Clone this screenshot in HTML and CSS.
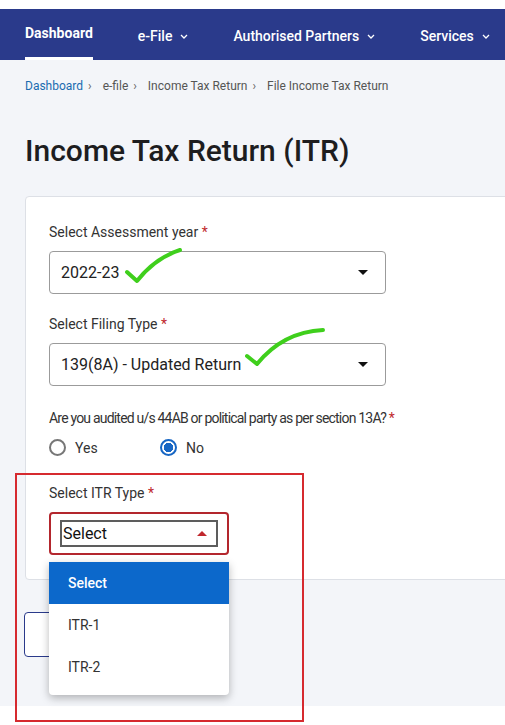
FILE: index.html
```html
<!DOCTYPE html>
<html lang="en">
<head>
<meta charset="utf-8">
<title>Income Tax Return (ITR)</title>
<link rel="stylesheet" href="styles.css">
</head>
<body>
<div class="page">
  <div class="topstrip"></div>
  <nav class="nav">
    <a class="nav-item active">Dashboard</a>
    <a class="nav-item">e-File <svg class="chev" viewBox="0 0 8 5" width="8" height="5"><path d="M1 1 L4 4 L7 1" fill="none" stroke="#fff" stroke-width="1.3"/></svg></a>
    <a class="nav-item">Authorised Partners <svg class="chev" viewBox="0 0 8 5" width="8" height="5"><path d="M1 1 L4 4 L7 1" fill="none" stroke="#fff" stroke-width="1.3"/></svg></a>
    <a class="nav-item">Services <svg class="chev" viewBox="0 0 8 5" width="8" height="5"><path d="M1 1 L4 4 L7 1" fill="none" stroke="#fff" stroke-width="1.3"/></svg></a>
  </nav>
  <main class="main">
    <div class="crumbs">
      <span class="crumb-link">Dashboard</span><span class="sep">›</span>
      <span>e-file</span><span class="sep">›</span>
      <span>Income Tax Return</span><span class="sep">›</span>
      <span>File Income Tax Return</span>
    </div>
    <h1 class="title">Income Tax Return (ITR)</h1>
    <section class="card">
      <div class="field">
        <label class="label">Select Assessment year <span class="req">*</span></label>
        <div class="select wide"><span>2022-23</span><span class="caret"></span></div>
      </div>
      <div class="field f2">
        <label class="label">Select Filing Type <span class="req">*</span></label>
        <div class="select wide"><span>139(8A) - Updated Return</span><span class="caret"></span></div>
      </div>
      <div class="field f3">
        <label class="label question">Are you audited u/s 44AB or political party as per section 13A? <span class="req">*</span></label>
        <div class="radios">
          <span class="radio"><span class="dot"></span>Yes</span>
          <span class="radio checked"><span class="dot"></span>No</span>
        </div>
      </div>
      <div class="field last">
        <label class="label">Select ITR Type <span class="req">*</span></label>
        <div class="select-wrap">
          <div class="select open"><span class="focus">Select<span class="caret up"></span></span></div>
          <ul class="menu">
            <li class="selected">Select</li>
            <li>ITR-1</li>
            <li>ITR-2</li>
          </ul>
        </div>
      </div>
    </section>
    <div class="actions"><button class="btn" aria-label="Back"></button></div>
  </main>
  <div class="annot-box"></div>
  <svg class="annot-check" width="505" height="400" viewBox="0 0 505 400">
    <path d="M127 272 L137 281 Q 155 258 180 250" fill="none" stroke="#3fcf1c" stroke-width="4" stroke-linecap="round" stroke-linejoin="round"/>
    <path d="M247 356 L257 364 Q 283 332 323 330" fill="none" stroke="#3fcf1c" stroke-width="4" stroke-linecap="round" stroke-linejoin="round"/>
  </svg>
</div>
</body>
</html>
```
FILE: styles.css
```css
html, body {
  margin: 0;
  padding: 0;
  overflow: hidden;
  background: #fff;
}
body {
  font-family: Roboto, "Liberation Sans", Arial, sans-serif;
  color: #222;
}
.page {
  position: relative;
  width: 505px;
  height: 725px;
  overflow: hidden;
}
.topstrip {
  height: 9px;
  background: #fff;
}
.nav {
  height: 51px;
  background: #2a3a8b;
  display: flex;
  align-items: stretch;
  padding-left: 25px;
  gap: 45px;
}
.nav-item {
  color: #fff;
  font-size: 14px;
  font-weight: 500;
  display: flex;
  align-items: center;
  gap: 8px;
  white-space: nowrap;
  box-sizing: border-box;
  padding-top: 5px;
  border-bottom: 3px solid transparent;
}
.nav-item.active {
  border-bottom-color: #fff;
  font-weight: 700;
  padding-top: 1px;
  margin-top: -2px;
}
.chev { margin-top: 2px; }
.main {
  background: #f3f5f9;
  padding: 0 0 49px 25px;
}
.crumbs {
  padding-top: 18px;
  font-size: 12px;
  line-height: 16px;
  color: #555;
  white-space: nowrap;
}
.crumb-link { color: #1a6bb0; }
.sep {
  margin: 0 8px 0 5px;
  color: #666;
}
.title {
  margin: 39px 0 27px;
  font-size: 30px;
  line-height: 36px;
  font-weight: 500;
  color: #1d1d1f;
}
.card {
  width: 520px;
  box-sizing: border-box;
  background: #fff;
  border: 1px solid #dde0e6;
  border-radius: 4px;
  padding: 25px 24px 24px 23px;
}
.field { margin-bottom: 20px; }
.field.f2 { margin-bottom: 22px; }
.field.f3 { margin-bottom: 27px; }
.field.last { margin-bottom: 0; }
.label {
  display: block;
  font-size: 14px;
  line-height: 20px;
  color: #333;
  margin-bottom: 9px;
}
.label.question {
  letter-spacing: -0.8px;
  margin-bottom: 11px;
}
.req { color: #c0282d; }
.select {
  box-sizing: border-box;
  height: 43px;
  border: 1px solid #9b9b9b;
  border-radius: 4px;
  display: flex;
  align-items: center;
  justify-content: space-between;
  padding: 0 17px 0 11px;
  font-size: 16px;
  color: #222;
  background: #fff;
}
.select.wide { width: 337px; }
.caret {
  width: 0;
  height: 0;
  border-left: 5px solid transparent;
  border-right: 5px solid transparent;
  border-top: 5px solid #111;
}
.caret.up {
  border-top: 0;
  border-bottom: 5px solid #c0282d;
}
.radios {
  display: flex;
  font-size: 14px;
  color: #333;
}
.radio {
  display: flex;
  align-items: center;
  gap: 9px;
  width: 111px;
}
.dot {
  width: 17px;
  height: 17px;
  box-sizing: border-box;
  border: 2px solid #777;
  border-radius: 50%;
  background: #fff;
}
.radio.checked .dot {
  border-color: #1766c4;
  background: radial-gradient(circle, #1766c4 0 4.5px, #fff 5px);
}
.select-wrap {
  position: relative;
  width: 180px;
}
.select.open {
  width: 180px;
  border: 2px solid #b3262d;
  padding: 0 9px;
}
.focus {
  flex: 1;
  height: 27px;
  box-sizing: border-box;
  border: 2px solid #5d5d5d;
  display: flex;
  align-items: center;
  justify-content: space-between;
  padding: 0 9px 0 1px;
  font-size: 16px;
  color: #111;
}
.menu {
  position: absolute;
  left: 0;
  top: 50px;
  width: 180px;
  margin: 0;
  padding: 0 0 7px;
  list-style: none;
  background: #fff;
  border-radius: 0 0 4px 4px;
  box-shadow: 0 3px 8px rgba(0, 0, 0, 0.28);
  z-index: 5;
}
.menu li {
  height: 42px;
  line-height: 42px;
  padding-left: 19px;
  font-size: 14px;
  color: #333;
}
.menu li.selected {
  background: #0c68cb;
  color: #fff;
  font-weight: 500;
}
.actions {
  margin-top: 32px;
  margin-left: -1px;
}
.btn {
  display: block;
  width: 130px;
  height: 45px;
  border: 1px solid #2a3a8b;
  border-radius: 4px;
  background: #fff;
}
.annot-box {
  position: absolute;
  left: 15px;
  top: 473px;
  width: 289px;
  height: 249px;
  box-sizing: border-box;
  border: 2px solid #d62a2f;
  z-index: 10;
}
.annot-check {
  position: absolute;
  left: 0;
  top: 0;
  z-index: 10;
  pointer-events: none;
}
```
